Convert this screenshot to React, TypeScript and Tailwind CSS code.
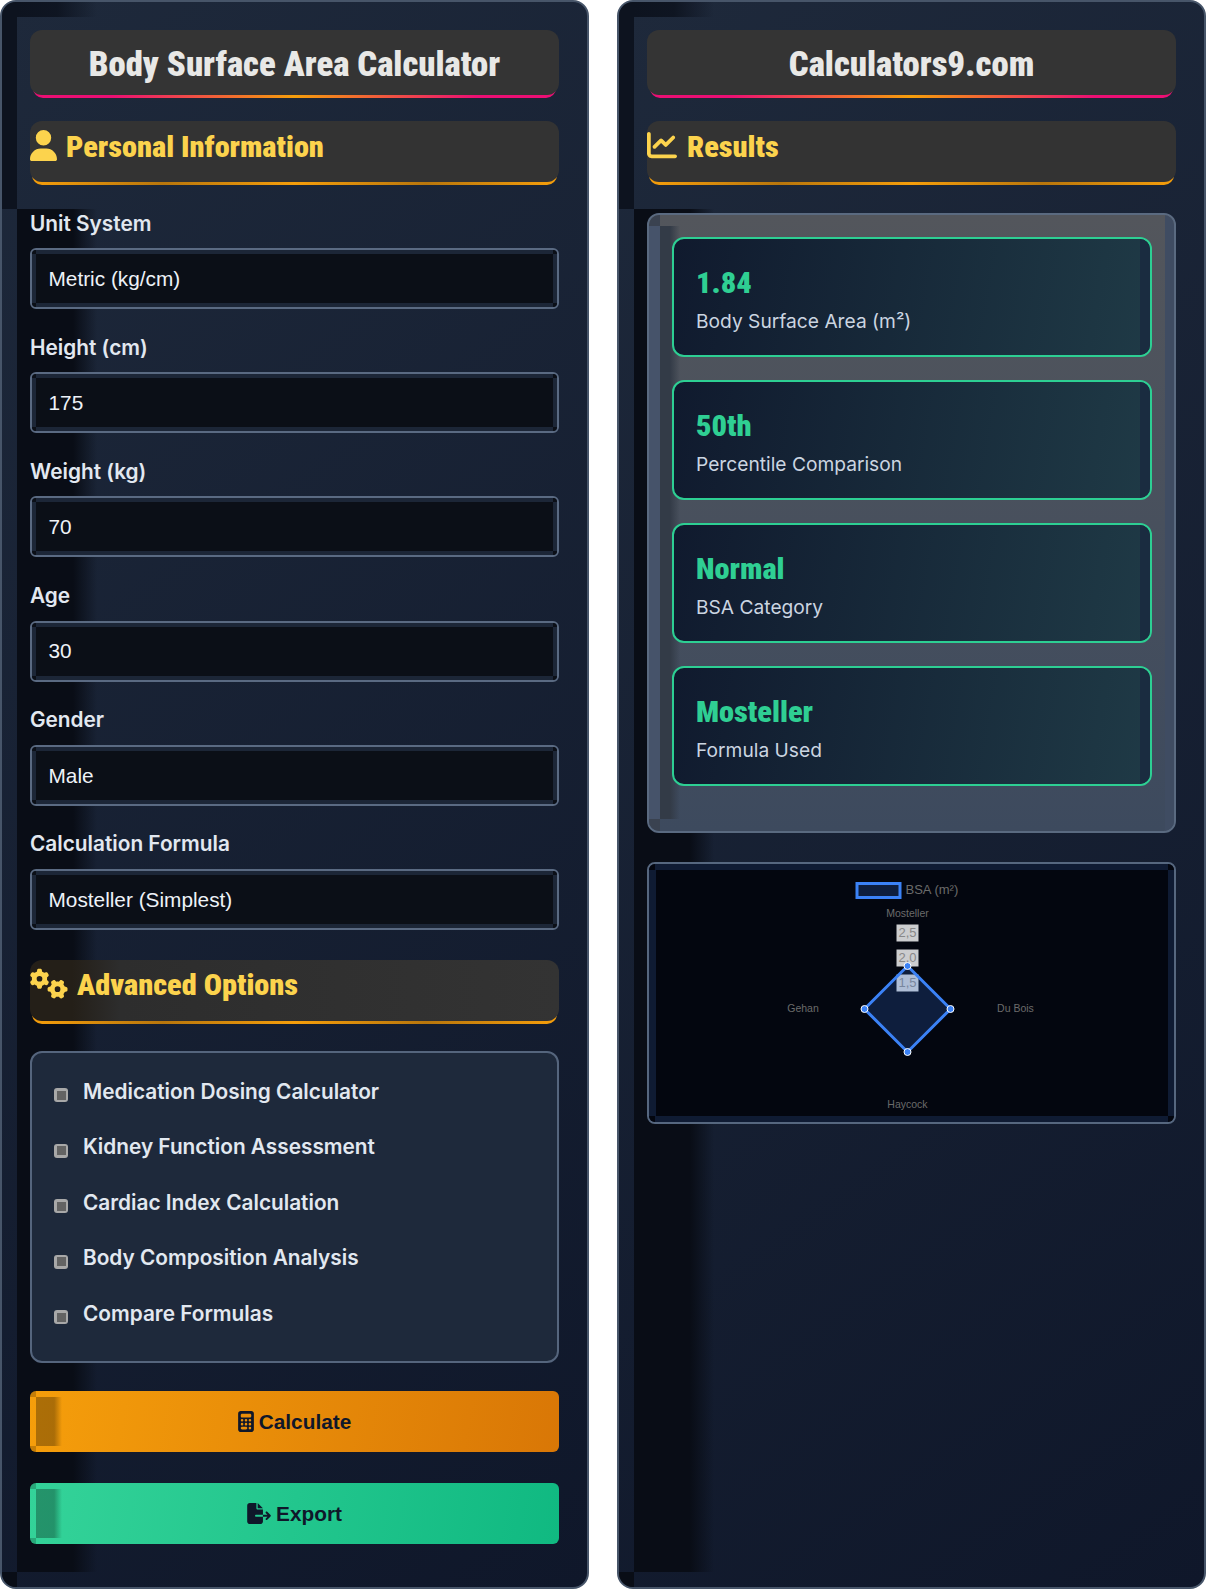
import React from "react";
import { FaUser, FaChartLine, FaGears, FaCalculator, FaFileExport } from "react-icons/fa6";

const cond = { fontFamily: '"Roboto", sans-serif', fontStretch: "75%" } as React.CSSProperties;

function Shade({ top = 207 }: { top?: number }) {
  return (
    <div className="pointer-events-none absolute inset-0 z-0">
      <div className="absolute left-0 top-0 w-[15px] bg-[#0d131f]" style={{ height: top }} />
      <div className="absolute left-[15px] top-0 h-[15px] w-[80px] bg-gradient-to-r from-[#0d131f] via-[#0d131f]/90 to-transparent" />
      <div className="absolute bottom-[15px] left-[15px] w-[80px] bg-gradient-to-r from-[#090d16] via-[#090d16] via-70% to-transparent" style={{ top }} />
      <div className="absolute bottom-0 left-0 h-[15px] w-[15px] bg-[#090d16]" />
    </div>
  );
}

function Panel({ children }: { children: React.ReactNode }) {
  return (
    <div className="relative h-[1589px] w-[589px] shrink-0 overflow-hidden rounded-[16px] border-2 border-[#475569] bg-[linear-gradient(145deg,#1e293b,#0f172a)] px-[28px] pt-[28px]">
      <Shade />
      <div className="relative z-10">{children}</div>
    </div>
  );
}

function Title({ text }: { text: string }) {
  return (
    <div className="relative h-[68px]">
      <div className="absolute bottom-0 left-[3px] right-[3px] h-[12px] rounded-b-[10px] bg-[linear-gradient(90deg,#ec0f74,#ec0f74_15%,#f59e0b_50%,#ec0f74_85%,#ec0f74)]" />
      <div className="absolute inset-x-0 bottom-[3px] top-0 flex items-center justify-center rounded-[12px] bg-[#343434] pt-[3px]">
        <span className="text-[34.7px] font-black leading-none text-[#e8e8e6]" style={cond}>{text}</span>
      </div>
    </div>
  );
}

function Section({ icon, text, gap, className, tint }: { icon: React.ReactNode; text: string; gap: string; className: string; tint?: boolean }) {
  return (
    <div className={`relative h-[64px] ${className}`}>
      <div className="absolute bottom-0 left-[2px] right-[2px] h-[12px] rounded-b-[10px] bg-[linear-gradient(90deg,#f59e0b,#b8760c_25%,#f59e0b_50%,#b8760c_75%,#f59e0b)]" />
      <div className={`absolute inset-x-0 bottom-[3px] top-0 flex items-center rounded-[12px] bg-[#333333] pb-[9px] ${gap} ${tint ? "bg-[linear-gradient(90deg,#241f18,#241f18_8%,#2d2d2d_17%,#333333)]" : ""}`}>
        {icon}
        <span className="text-[30.3px] font-black leading-none text-[#fcd34d]" style={cond}>{text}</span>
      </div>
    </div>
  );
}

function Corners({ s, c }: { s: string; c: string }) {
  return (
    <>
      <div className={`absolute left-0 top-0 ${s} ${c}`} />
      <div className={`absolute right-0 top-0 ${s} ${c}`} />
      <div className={`absolute bottom-0 left-0 ${s} ${c}`} />
      <div className={`absolute bottom-0 right-0 ${s} ${c}`} />
    </>
  );
}

function Field({ label, value }: { label: string; value: string }) {
  return (
    <div className="mb-[23.7px]">
      <div className="mb-[11.5px] h-[28px] pt-[1px] font-['Inter',sans-serif] text-[20.8px] font-semibold leading-[28px] text-[#e2e8f0]">{label}</div>
      <div className="relative h-[61px] overflow-hidden rounded-[6px] border-2 border-[#5a6a82] bg-[#1c2637] px-[4px] py-[4px]">
        <Corners s="h-[4px] w-[4px]" c="bg-[#0b0f17]" />
        <div className="flex h-full items-center bg-[#0b0f17] pl-[12.5px] font-['Liberation_Sans',sans-serif] text-[20.8px] text-[#eef2f7]">{value}</div>
      </div>
    </div>
  );
}

function Check({ label }: { label: string }) {
  return (
    <div className="flex h-[55.5px] items-center">
      <div className="-ml-[1px] mr-[15px] mt-[8px] flex h-[14px] w-[14px] items-center justify-center rounded-[3px] bg-[#a8a8a8]">
        <div className="h-[9px] w-[9px] bg-[#636363]" />
      </div>
      <span className="font-['Inter',sans-serif] text-[20.8px] font-semibold text-[#e2e8f0]">{label}</span>
    </div>
  );
}

function Btn({ icon, label, cls, mb }: { icon: React.ReactNode; label: string; cls: string; mb: string }) {
  return (
    <div className={`relative flex h-[61px] items-center justify-center gap-[5px] overflow-hidden rounded-[6px] ${cls} ${mb} font-['Liberation_Sans',sans-serif] text-[20.8px] font-bold text-[#0f172a]`}>
      <div className="absolute left-0 top-0 h-[6px] w-[6px] bg-black/20" />
      <div className="absolute bottom-0 left-0 h-[6px] w-[6px] bg-black/20" />
      <div className="absolute bottom-[6px] left-[6px] top-[6px] w-[26px] bg-gradient-to-r from-black/30 via-black/30 via-70% to-transparent" />
      {icon}
      <span className="relative">{label}</span>
    </div>
  );
}

function Card({ value, label }: { value: string; label: string }) {
  return (
    <div className="relative mb-[23px] flex h-[120px] flex-col overflow-hidden rounded-[12px] border-2 border-[#2dcf93] bg-[linear-gradient(100deg,#101a2e,#1f3a46)] pl-[22px] pt-[27px]">
      <div className="absolute bottom-0 right-0 top-0 w-[10px] bg-[#1a2c40]" />
      <div className="relative h-[34px] text-[30.4px] font-black leading-[34px] text-[#2fcf93]" style={cond}>{value}</div>
      <div className="relative mt-[7px] font-['Inter',sans-serif] text-[19.2px] leading-[28px] text-[#cbd5e1]">{label}</div>
    </div>
  );
}

function Chart() {
  const f = "Liberation Sans, sans-serif";
  const ticks = [["2,5", 63], ["2,0", 88], ["1,5", 113]] as const;
  const gray = "#6b6b6b";
  return (
    <svg viewBox="0 0 511 246" className="block h-full w-full bg-[#03060f]">
      <rect x="200.5" y="13.5" width="43" height="14" fill="#3b82f6" fillOpacity="0.2" stroke="#3b82f6" strokeWidth="3" />
      <text x="249" y="23.5" fontSize="13" fill={gray} fontFamily={f}>BSA (m²)</text>
      <text x="251" y="47" fontSize="10.5" fill={gray} textAnchor="middle" fontFamily={f}>Mosteller</text>
      {ticks.map(([t, y]) => (
        <g key={t}>
          <rect x="240" y={y - 8.5} width="22" height="17" fill="#fff" fillOpacity="0.8" />
          <text x="251" y={y + 4} fontSize="13" fill="#888" textAnchor="middle" fontFamily={f}>{t}</text>
        </g>
      ))}
      <polygon points="251,96 294,139 251,182 208,139" fill="#3b82f6" fillOpacity="0.2" stroke="#3b82f6" strokeWidth="3" />
      {[[251, 96], [294, 139], [251, 182], [208, 139]].map(([x, y]) => (
        <circle key={`${x}-${y}`} cx={x} cy={y} r="3.5" fill="#3b82f6" stroke="#fff" strokeWidth="1" />
      ))}
      <text x="146.5" y="142" fontSize="10.5" fill={gray} textAnchor="middle" fontFamily={f}>Gehan</text>
      <text x="359" y="142" fontSize="10.5" fill={gray} textAnchor="middle" fontFamily={f}>Du Bois</text>
      <text x="251" y="238" fontSize="10.5" fill={gray} textAnchor="middle" fontFamily={f}>Haycock</text>
    </svg>
  );
}

export default function App() {
  return (
    <div className="flex h-[1589px] w-[1206px] justify-between bg-white">
      <Panel>
        <Title text="Body Surface Area Calculator" />
        <div className="h-[23px]" />
        <Section icon={<FaUser className="mb-[3px] h-[31px] w-[27px] text-[#fcd34d]" />} text="Personal Information" gap="gap-[9px]" className="mb-[23.5px]" />
        <Field label="Unit System" value="Metric (kg/cm)" />
        <Field label="Height (cm)" value="175" />
        <Field label="Weight (kg)" value="70" />
        <Field label="Age" value="30" />
        <Field label="Gender" value="Male" />
        <Field label="Calculation Formula" value="Mosteller (Simplest)" />
        <div className="h-[6px]" />
        <Section icon={<FaGears className="mb-[4px] h-[31px] w-[38px] text-[#fcd34d]" />} text="Advanced Options" gap="gap-[9px]" className="mb-[27.5px]" tint />
        <div className="mb-[28px] h-[311.5px] rounded-[12px] border-2 border-[#55657d] bg-[#1e293b] pl-[23px] pt-[10.5px]">
          <Check label="Medication Dosing Calculator" />
          <Check label="Kidney Function Assessment" />
          <Check label="Cardiac Index Calculation" />
          <Check label="Body Composition Analysis" />
          <Check label="Compare Formulas" />
        </div>
        <Btn icon={<FaCalculator className="relative h-[21px] w-[16px]" />} label="Calculate" cls="bg-[linear-gradient(100deg,#f59e0b,#d97706)]" mb="mb-[31px]" />
        <Btn icon={<FaFileExport className="relative h-[21px] w-[24px]" />} label="Export" cls="bg-[linear-gradient(100deg,#34d399,#10b981)]" mb="" />
      </Panel>
      <Panel>
        <Title text="Calculators9.com" />
        <div className="h-[23px]" />
        <Section icon={<FaChartLine className="mb-[4px] h-[30px] w-[30px] text-[#fcd34d]" />} text="Results" gap="gap-[10px]" className="mb-[28px]" />
        <div className="relative mb-[29px] h-[620px] overflow-hidden rounded-[12px] border-2 border-[#5a6a80] bg-[linear-gradient(180deg,#53565c,#3d4a5e)] pl-[23px] pr-[22px] pt-[22px]">
          <div className="absolute bottom-0 left-0 top-[11px] w-[11px] bg-[#46536a]" />
          <div className="absolute bottom-[12px] left-[11px] top-[11px] w-[20px] bg-gradient-to-r from-[#333b47] via-[#333b47] via-50% to-transparent" />
          <div className="absolute bottom-0 right-0 top-0 w-[9px] bg-[#3f4c62]" />
          <div className="absolute left-0 top-0 h-[11px] w-[11px] bg-[#3a4250]" />
          <div className="absolute bottom-0 left-0 h-[12px] w-[11px] bg-[#3a4250]" />
          <div className="relative">
            <Card value="1.84" label="Body Surface Area (m²)" />
            <Card value="50th" label="Percentile Comparison" />
            <Card value="Normal" label="BSA Category" />
            <Card value="Mosteller" label="Formula Used" />
          </div>
        </div>
        <div className="relative h-[262px] overflow-hidden rounded-[8px] border-2 border-[#56677f] bg-[#0f1b33] py-[6px] pl-[7px] pr-[6px]">
          <Corners s="h-[6px] w-[6px]" c="bg-[#03060f]" />
          <div className="relative h-full">
            <Chart />
          </div>
        </div>
      </Panel>
    </div>
  );
}
